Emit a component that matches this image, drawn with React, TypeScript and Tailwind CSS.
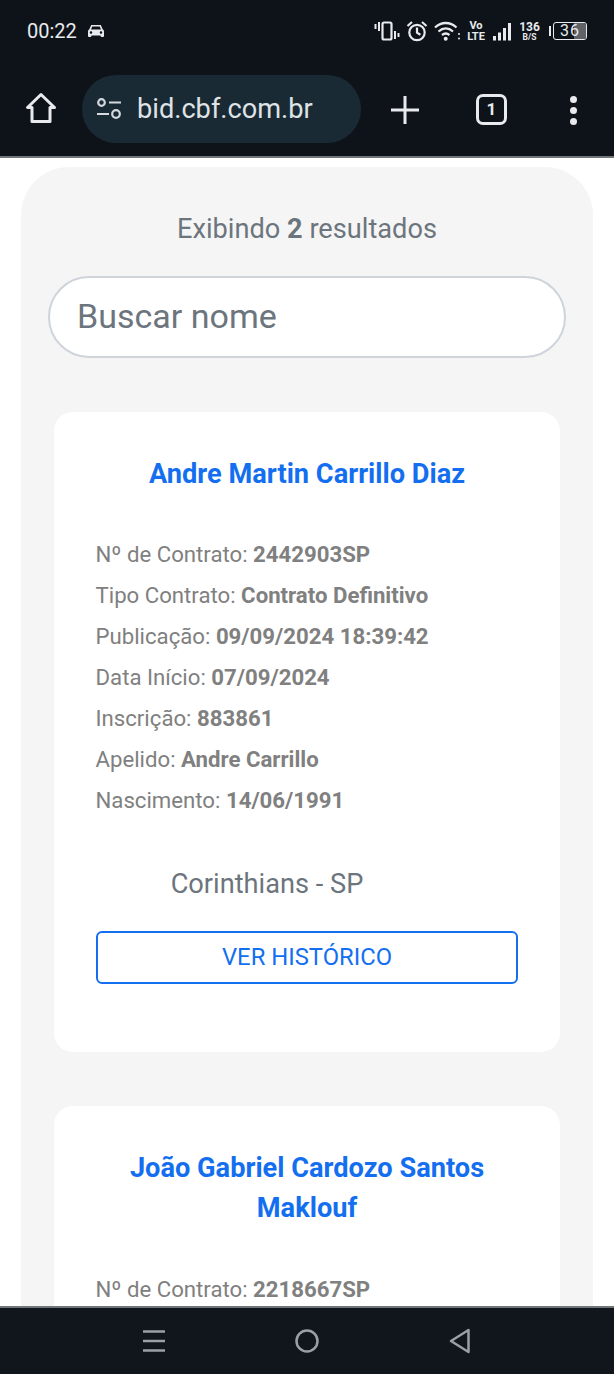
const rows1: [string, string][] = [
  ["Nº de Contrato:", "2442903SP"],
  ["Tipo Contrato:", "Contrato Definitivo"],
  ["Publicação:", "09/09/2024 18:39:42"],
  ["Data Início:", "07/09/2024"],
  ["Inscrição:", "883861"],
  ["Apelido:", "Andre Carrillo"],
  ["Nascimento:", "14/06/1991"],
];

const StatusBar = () => (
  <div className="flex h-[62px] items-center justify-between pl-[27px] pr-[27px] text-[#e8eaed]">
    <div className="flex items-center gap-[11px]">
      <span className="text-[20px] leading-none">00:22</span>
      <svg width="16" height="14" viewBox="0 0 16 14" fill="#e8eaed">
        <path d="M3.2 1h9.6l2 4.6c.7.4 1.2 1 1.2 1.9V12a1 1 0 0 1-1 1h-1.4a1 1 0 0 1-1-1v-.6H3.4v.6a1 1 0 0 1-1 1H1a1 1 0 0 1-1-1V7.500c0-.9.5-1.500 1.200-1.900z M4.300 2.600 3 5.500h10l-1.300-2.900z M3 7.200a1.300 1.300 0 1 0 0 2.600 1.300 1.300 0 0 0 0-2.600z M13 7.200a1.300 1.300 0 1 0 0 2.600 1.300 1.300 0 0 0 0-2.600z" fillRule="evenodd" />
      </svg>
    </div>
    <div className="flex items-center">
      {/* vibrate */}
      <svg width="26" height="20" viewBox="0 0 26 20" fill="none" stroke="#e8eaed">
        <path d="M1.500 3v5M5 1v9M21 10v8M24.500 12v4" strokeWidth="2" />
        <rect x="8.500" y="1.500" width="9" height="17" rx="1.500" strokeWidth="2.200" />
      </svg>
      {/* alarm */}
      <svg className="ml-[6px]" width="22" height="22" viewBox="0 0 22 22" fill="none" stroke="#e8eaed" strokeWidth="2.200">
        <circle cx="11" cy="12.500" r="7.700" />
        <path d="M11 7.500v5.200l3.400 2M1.500 6 6 2M20.500 6 16 2" />
      </svg>
      {/* wifi */}
      <svg className="ml-[6px]" width="26" height="20" viewBox="0 0 26 20" fill="none" stroke="#e8eaed" strokeWidth="2.300">
        <path d="M1 6.500c6.500-6 15-6 21.500 0M4.500 10.500c4.500-4 10-4 14.500 0M8 14c2.300-1.800 5.200-1.800 7.500 0" />
        <circle cx="11.700" cy="17.800" r="2" fill="#e8eaed" stroke="none" />
        <circle cx="25" cy="13" r="1" fill="#e8eaed" stroke="none" />
        <circle cx="25" cy="17.500" r="1" fill="#e8eaed" stroke="none" />
      </svg>
      <div className="ml-[7px] flex w-[18px] flex-col items-center text-[11px] font-bold leading-[11px]">
        <span>Vo</span>
        <span>LTE</span>
      </div>
      {/* signal */}
      <svg className="ml-[8px]" width="18" height="19" viewBox="0 0 18 19" fill="#e8eaed">
        <rect x="0" y="14" width="3" height="4.500" />
        <rect x="5" y="10.500" width="3" height="8" />
        <rect x="10" y="6" width="3" height="12.500" />
        <rect x="15" y="1" width="3" height="17.500" />
      </svg>
      <div className="ml-[9px] flex w-[19px] flex-col items-center font-bold leading-none">
        <span className="text-[12px] leading-[11px]">136</span>
        <span className="text-[8.500px] leading-[8px]">B/S</span>
      </div>
      {/* battery */}
      <div className="ml-[10px] flex items-center">
        <div className="mr-[2px] h-[10px] w-[2px] bg-[#e8eaed]" />
        <div className="relative flex h-[18px] w-[34px] items-center justify-center overflow-hidden rounded-[3px] border border-[#e8eaed]">
          <div className="absolute inset-y-0 right-0 w-[12px] bg-[#5f6368]" />
          <span className="relative text-[16px] leading-none tracking-[1px]">36</span>
        </div>
      </div>
    </div>
  </div>
);

const Toolbar = () => (
  <div className="flex h-[95px] items-start pl-[25px] pt-[13px] text-[#e8eaed]">
    <svg className="mt-[17px]" width="32" height="32" viewBox="0 0 32 32" fill="none" stroke="#e8eaed" strokeWidth="3" strokeLinejoin="round">
      <path d="M16 2.500 2.500 15.500h4.500V29.500h18V15.500h4.500z" />
    </svg>
    <div className="ml-[25px] flex h-[68px] w-[279px] items-center rounded-[34px] bg-[#1a2a35] pl-[14px]">
      <svg width="26" height="24" viewBox="0 0 26 24" fill="none" stroke="#d5d9dd" strokeWidth="2.200">
        <circle cx="5.500" cy="5.500" r="3.300" />
        <path d="M13 5.500h12M1 17h12" />
        <circle cx="20" cy="17" r="3.800" />
      </svg>
      <span className="ml-[15px] pt-[2px] text-[27.200px] leading-none text-[#dfe3e6]">bid.cbf.com.br</span>
    </div>
    <svg className="ml-[30px] mt-[21px]" width="28" height="28" viewBox="0 0 28 28" stroke="#e8eaed" strokeWidth="3">
      <path d="M0 14h28M14 0v28" />
    </svg>
    <div className="ml-[57px] mt-[19px] flex h-[31px] w-[31px] items-center justify-center rounded-[7px] border-[3px] border-[#e8eaed] text-[17px] font-bold leading-none">
      1
    </div>
    <div className="ml-[63px] mt-[21px] flex flex-col gap-[4px]">
      <div className="h-[7px] w-[7px] rounded-full bg-[#e8eaed]" />
      <div className="h-[7px] w-[7px] rounded-full bg-[#e8eaed]" />
      <div className="h-[7px] w-[7px] rounded-full bg-[#e8eaed]" />
    </div>
  </div>
);

const Row = ({ label, value }: { label: string; value: string }) => (
  <p className="-ml-[0.5px] h-[41px] text-[22.200px] leading-[41px] text-[#808080]">
    {label} <b className="font-bold">{value}</b>
  </p>
);

export default function App() {
  return (
    <div className="flex h-[1374px] w-[614px] flex-col overflow-hidden bg-white font-['Roboto',sans-serif]">
      <header className="h-[158px] shrink-0 border-b-2 border-[#70757a] bg-[#0e1319]">
        <StatusBar />
        <Toolbar />
      </header>

      <main className="min-h-0 flex-1 overflow-hidden px-[21px] pt-[9px]">
        <div className="rounded-t-[48px] bg-[#f5f5f5] px-[27px] pt-[46px]">
          <p className="text-center text-[27.200px] leading-[32px] text-[#6c757d]">
            Exibindo <b className="font-bold">2</b> resultados
          </p>
          <div className="mt-[31px] flex h-[82px] items-center rounded-[41px] border-2 border-[#ced4da] bg-white pb-[2px] pl-[27px] text-[34px] text-[#6c757d]">
            Buscar nome
          </div>

          <section className="mx-[6px] mt-[54px] h-[640px] rounded-[19px] bg-white px-[42px] pt-[42px]">
            <h2 className="text-center text-[27.200px] font-bold leading-[40px] text-[#146ff0]">
              Andre Martin Carrillo Diaz
            </h2>
            <div className="mt-[40px]">
              {rows1.map(([label, value]) => (
                <Row key={label} label={label} value={value} />
              ))}
            </div>
            <div className="mt-[43px] flex h-[40px] items-center justify-center text-[27.200px] text-[#6c757d]">
              <span>Corinthians - SP</span>
              <div className="w-[80px]" />
            </div>
            <div className="mt-[27px] flex h-[53px] items-center justify-center rounded-[6px] border-2 border-[#146ff0] text-[23.800px] text-[#146ff0]">
              VER HISTÓRICO
            </div>
          </section>

          <section className="mx-[6px] mt-[54px] h-[300px] rounded-t-[19px] bg-white px-[42px] pt-[42px]">
            <h2 className="text-center text-[27.200px] font-bold leading-[40px] text-[#146ff0]">
              João Gabriel Cardozo Santos Maklouf
            </h2>
            <div className="mt-[41px]">
              <Row label="Nº de Contrato:" value="2218667SP" />
            </div>
          </section>
        </div>
      </main>

      <nav className="flex h-[68px] shrink-0 items-center border-t-2 border-[#70757a] bg-[#11161c]">
        <svg className="ml-[142px]" width="24" height="24" viewBox="0 0 24 24" stroke="#9aa0a6" strokeWidth="2.500">
          <path d="M1 2.500h22M1 12h22M1 21.500h22" />
        </svg>
        <svg className="ml-[129px]" width="24" height="24" viewBox="0 0 24 24" fill="none" stroke="#9aa0a6" strokeWidth="2.500">
          <circle cx="12" cy="12" r="10.500" />
        </svg>
        <svg className="ml-[130px]" width="22" height="26" viewBox="0 0 22 26" fill="none" stroke="#9aa0a6" strokeWidth="2.500" strokeLinejoin="round">
          <path d="M19.500 2 2 13l17.500 11z" />
        </svg>
      </nav>
    </div>
  );
}
